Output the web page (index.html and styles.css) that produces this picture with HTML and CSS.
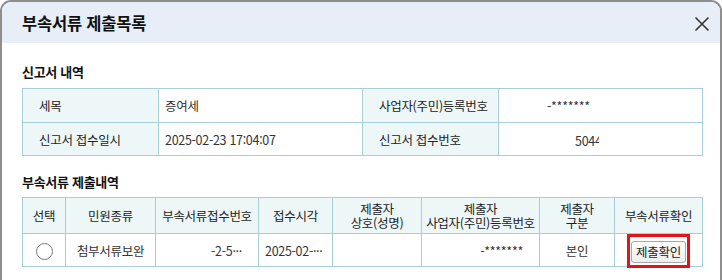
FILE: index.html
```html
<!DOCTYPE html>
<html lang="ko">
<head>
<meta charset="utf-8">
<link rel="stylesheet" href="styles.css">
</head>
<body>
<div class="dialog">
  <div class="dlg-header">
    <h1 class="dlg-title">부속서류 제출목록</h1>
    <button class="close-btn" aria-label="닫기">
      <svg width="16" height="16" viewBox="0 0 16 16"><path d="M1.5 1.5 L14.5 14.5 M14.5 1.5 L1.5 14.5" stroke="#333" stroke-width="1.6" fill="none"/></svg>
    </button>
  </div>
  <div class="dlg-body">
    <h2 class="sec-title first">신고서 내역</h2>
    <table class="info-table">
      <colgroup><col class="c136"><col class="c204"><col class="c136"><col class="c204"></colgroup>
      <tr>
        <th>세목</th><td>증여세</td>
        <th>사업자(주민)등록번호</th><td class="masked">-*******</td>
      </tr>
      <tr>
        <th>신고서 접수일시</th><td>2025-02-23 17:04:07</td>
        <th>신고서 접수번호</th><td class="recno"><span class="clip">5044</span></td>
      </tr>
    </table>

    <h2 class="sec-title second">부속서류 제출내역</h2>
    <table class="list-table">
      <colgroup>
        <col style="width:43px"><col style="width:90px"><col style="width:103px"><col style="width:74px">
        <col style="width:89px"><col style="width:118px"><col style="width:75px"><col style="width:88px">
      </colgroup>
      <tr class="head">
        <th>선택</th><th>민원종류</th><th>부속서류접수번호</th><th>접수시각</th>
        <th><span class="ln">제출자</span><span class="ln">상호(성명)</span></th>
        <th><span class="ln">제출자</span><span class="ln">사업자(주민)등록번호</span></th>
        <th><span class="ln">제출자</span><span class="ln">구분</span></th>
        <th>부속서류확인</th>
      </tr>
      <tr class="row">
        <td class="center"><span class="radio"></span></td>
        <td class="center">첨부서류보완</td>
        <td class="right">-2-5···</td>
        <td class="left">2025-02-···</td>
        <td></td>
        <td class="right">-*******</td>
        <td class="center">본인</td>
        <td class="center btn-cell"><span class="hl"><button class="submit-btn">제출확인</button></span></td>
      </tr>
    </table>
  </div>
</div>
</body>
</html>
```

FILE: styles.css
```css
* { box-sizing: border-box; }
html, body { margin: 0; padding: 0; background: #fff; }
body {
  width: 722px;
  height: 280px;
  overflow: hidden;
  font-family: "Noto Sans CJK KR", "Noto Sans", sans-serif;
  color: #222;
}
.dialog {
  width: 722px;
  height: 280px;
  border: 2px solid #8e8e8e;
  border-bottom: none;
  border-radius: 11px 11px 0 0;
  overflow: hidden;
  background: #fff;
}
.dlg-header {
  height: 41px;
  background: #e8eef8;
  display: flex;
  align-items: center;
  justify-content: space-between;
  padding: 0 10px 0 20px;
}
.dlg-title {
  margin: 0;
  font-size: 16.5px;
  font-weight: 700;
  color: #111;
  letter-spacing: -0.2px;
}
.close-btn {
  border: none;
  background: transparent;
  padding: 0;
  width: 16px;
  height: 16px;
  display: flex;
  margin-top: 3px;
}
.dlg-body {
  padding: 0 0 0 20px;
}
.sec-title {
  margin: 0;
  font-size: 13px;
  font-weight: 700;
  line-height: 20px;
  color: #111;
  letter-spacing: -0.3px;
}
.sec-title.first { margin-top: 19px; margin-bottom: 6px; }
.sec-title.second { margin-top: 16px; margin-bottom: 5px; }
table {
  border-collapse: collapse;
  table-layout: fixed;
  width: 681px;
  font-size: 12.5px;
  letter-spacing: -0.3px;
}
th, td {
  border: 1px solid #a9cfd6;
  padding: 0;
  white-space: nowrap;
  overflow: hidden;
}
.c136 { width: 136px; }
.c204 { width: 204px; }
.info-table th {
  background: #eef7f7;
  font-weight: 400;
  text-align: left;
  padding-left: 16px;
  color: #222;
}
.info-table td { padding-left: 6px; color: #333; }
.info-table tr:first-child th, .info-table tr:first-child td { height: 34px; }
.info-table tr:last-child th, .info-table tr:last-child td { height: 33px; }
.info-table td.masked { padding-left: 48px; }
.info-table td.recno { padding-left: 76px; }
.clip {
  display: inline-block;
  width: 24px;
  overflow: hidden;
  vertical-align: middle;
  white-space: nowrap;
}
.list-table .head th {
  background: #eef7f7;
  font-weight: 400;
  height: 36px;
  line-height: 15px;
  color: #222;
  text-align: center;
}
.ln { display: block; line-height: 14px; }
.list-table .row td { height: 33px; color: #333; }
.center { text-align: center; }
.right { text-align: right; padding-right: 16px; }
.left { text-align: left; padding-left: 6px; }
.radio {
  display: inline-block;
  width: 17px;
  height: 17px;
  border: 1px solid #777;
  border-radius: 50%;
  vertical-align: middle;
  background: #fff;
}
.btn-cell { overflow: visible; }
.hl {
  display: inline-block;
  border: 3px solid #e3131b;
  padding: 4px 1px 2px 1px;
  margin-top: -1px;
  margin-bottom: -2px;
  vertical-align: middle;
}
.submit-btn {
  display: block;
  width: 55px;
  height: 22px;
  border: 1px solid #a8a8a8;
  border-radius: 3px;
  background: linear-gradient(#fdfdfd, #eeeeee);
  font-family: inherit;
  font-size: 12.5px;
  letter-spacing: -0.3px;
  color: #222;
  padding: 0;
}
```
